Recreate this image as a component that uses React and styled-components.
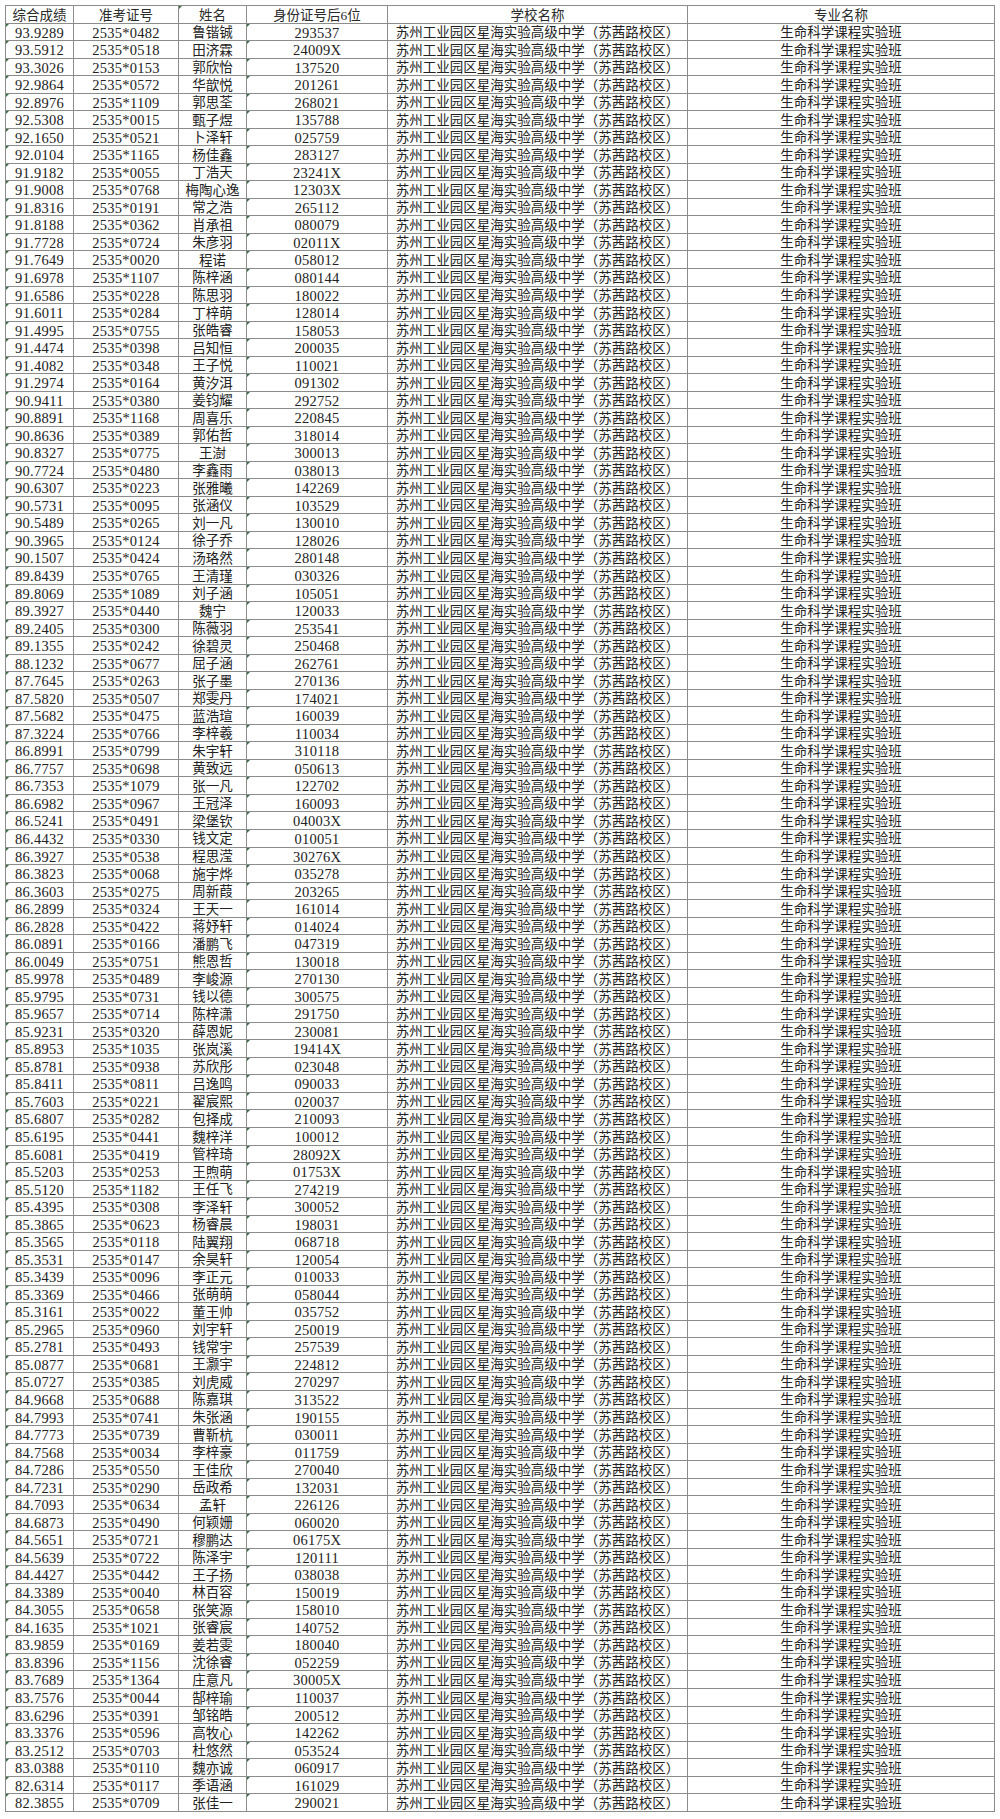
import React from "react";
import styled, { createGlobalStyle, css } from "styled-components";

const GlobalStyle = createGlobalStyle`
  html, body {
    margin: 0;
    padding: 0;
    background: #ffffff;
  }
  body {
    font-family: "Liberation Serif", "Noto Sans CJK SC", serif;
    color: #1e1e1e;
  }
`;

const Page = styled.div`
  padding: 5px 0 0 5px;
  width: 1000px;
  box-sizing: border-box;
`;

const Sheet = styled.div`
  display: grid;
  grid-template-columns: 67px 104px 67px 140px 299px 306px;
  grid-auto-rows: 16.544px;
  gap: 1px;
  padding: 1px;
  background: #8c8c8c;
  width: fit-content;
`;

const Cell = styled.div`
  position: relative;
  background: #ffffff;
  display: flex;
  align-items: center;
  justify-content: center;
  padding-top: 2px;
  box-sizing: border-box;
  font-size: 13.5px;
  line-height: 1;
  white-space: nowrap;
  overflow: hidden;
  font-family: "Liberation Serif", "Noto Sans CJK SC", serif;
  color: #222222;
  ${(p) =>
    p.$num &&
    css`
      font-size: 14.5px;
      letter-spacing: 0.25px;
    `}
  ${(p) =>
    p.$flag &&
    css`
      &::before {
        content: "";
        position: absolute;
        left: 0;
        top: 0;
        width: 0;
        height: 0;
        border-top: 3px solid #3d6e45;
        border-right: 3px solid transparent;
      }
    `}
`;

const HeadCell = styled(Cell)`
  color: #2a2a2a;
`;

const DATA = `93.9289|2535*0482|鲁锴铖|293537
93.5912|2535*0518|田济霖|24009X
93.3026|2535*0153|郭欣怡|137520
92.9864|2535*0572|华歆悦|201261
92.8976|2535*1109|郭思荃|268021
92.5308|2535*0015|甄子煜|135788
92.1650|2535*0521|卜泽轩|025759
92.0104|2535*1165|杨佳鑫|283127
91.9182|2535*0055|丁浩天|23241X
91.9008|2535*0768|梅陶心逸|12303X
91.8316|2535*0191|常之浩|265112
91.8188|2535*0362|肖承祖|080079
91.7728|2535*0724|朱彦羽|02011X
91.7649|2535*0020|程诺|058012
91.6978|2535*1107|陈梓涵|080144
91.6586|2535*0228|陈思羽|180022
91.6011|2535*0284|丁梓萌|128014
91.4995|2535*0755|张皓睿|158053
91.4474|2535*0398|吕知恒|200035
91.4082|2535*0348|王子悦|110021
91.2974|2535*0164|黄汐洱|091302
90.9411|2535*0380|姜钧耀|292752
90.8891|2535*1168|周喜乐|220845
90.8636|2535*0389|郭佑哲|318014
90.8327|2535*0775|王澍|300013
90.7724|2535*0480|李鑫雨|038013
90.6307|2535*0223|张雅曦|142269
90.5731|2535*0095|张涵仪|103529
90.5489|2535*0265|刘一凡|130010
90.3965|2535*0124|徐子乔|128026
90.1507|2535*0424|汤珞然|280148
89.8439|2535*0765|王清瑾|030326
89.8069|2535*1089|刘子涵|105051
89.3927|2535*0440|魏宁|120033
89.2405|2535*0300|陈薇羽|253541
89.1355|2535*0242|徐碧灵|250468
88.1232|2535*0677|屈子涵|262761
87.7645|2535*0263|张子墨|270136
87.5820|2535*0507|郑雯丹|174021
87.5682|2535*0475|蓝浩瑄|160039
87.3224|2535*0766|李梓羲|110034
86.8991|2535*0799|朱宇轩|310118
86.7757|2535*0698|黄致远|050613
86.7353|2535*1079|张一凡|122702
86.6982|2535*0967|王冠泽|160093
86.5241|2535*0491|梁堡钦|04003X
86.4432|2535*0330|钱文定|010051
86.3927|2535*0538|程思滢|30276X
86.3823|2535*0068|施宇烨|035278
86.3603|2535*0275|周新葭|203265
86.2899|2535*0324|王天一|161014
86.2828|2535*0422|蒋妤轩|014024
86.0891|2535*0166|潘鹏飞|047319
86.0049|2535*0751|熊恩哲|130018
85.9978|2535*0489|李峻源|270130
85.9795|2535*0731|钱以德|300575
85.9657|2535*0714|陈梓潇|291750
85.9231|2535*0320|薛恩妮|230081
85.8953|2535*1035|张岚溪|19414X
85.8781|2535*0938|苏欣彤|023048
85.8411|2535*0811|吕逸鸣|090033
85.7603|2535*0221|翟宸熙|020037
85.6807|2535*0282|包择成|210093
85.6195|2535*0441|魏梓洋|100012
85.6081|2535*0419|管梓琦|28092X
85.5203|2535*0253|王煦萌|01753X
85.5120|2535*1182|王任飞|274219
85.4395|2535*0308|李泽轩|300052
85.3865|2535*0623|杨睿晨|198031
85.3565|2535*0118|陆翼翔|068718
85.3531|2535*0147|余昊轩|120054
85.3439|2535*0096|李正元|010033
85.3369|2535*0466|张萌萌|058044
85.3161|2535*0022|董王帅|035752
85.2965|2535*0960|刘宇轩|250019
85.2781|2535*0493|钱常宇|257539
85.0877|2535*0681|王灏宇|224812
85.0727|2535*0385|刘虎威|270297
84.9668|2535*0688|陈嘉琪|313522
84.7993|2535*0741|朱张涵|190155
84.7773|2535*0739|曹靳杭|030011
84.7568|2535*0034|李梓豪|011759
84.7286|2535*0550|王佳欣|270040
84.7231|2535*0290|岳政希|132031
84.7093|2535*0634|孟轩|226126
84.6873|2535*0490|何颖姗|060020
84.5651|2535*0721|穆鹏达|06175X
84.5639|2535*0722|陈泽宇|120111
84.4427|2535*0442|王子扬|038038
84.3389|2535*0040|林百容|150019
84.3055|2535*0658|张笑源|158010
84.1635|2535*1021|张睿宸|140752
83.9859|2535*0169|姜若雯|180040
83.8396|2535*1156|沈徐睿|052259
83.7689|2535*1364|庄意凡|30005X
83.7576|2535*0044|郜梓瑜|110037
83.6296|2535*0391|邹铭皓|200512
83.3376|2535*0596|高牧心|142262
83.2512|2535*0703|杜悠然|053524
83.0388|2535*0110|魏亦诚|060917
82.6314|2535*0117|季语涵|161029
82.3855|2535*0709|张佳一|290021`;

const SCHOOL = "苏州工业园区星海实验高级中学（苏茜路校区）";
const MAJOR = "生命科学课程实验班";

const HEADERS = ["综合成绩", "准考证号", "姓名", "身份证号后6位", "学校名称", "专业名称"];

const rows = DATA.split("\n").map((line) => line.split("|"));

export default function App() {
  return (
    <>
      <GlobalStyle />
      <Page>
        <Sheet role="table">
          {HEADERS.map((h, i) => (
            <HeadCell key={h} role="columnheader" $flag={i === 2}>
              {h}
            </HeadCell>
          ))}
          {rows.map(([score, ticket, name, id6]) => (
            <React.Fragment key={ticket}>
              <Cell role="cell" $num $flag>
                {score}
              </Cell>
              <Cell role="cell" $num>
                {ticket}
              </Cell>
              <Cell role="cell">{name}</Cell>
              <Cell role="cell" $num $flag>
                {id6}
              </Cell>
              <Cell role="cell">{SCHOOL}</Cell>
              <Cell role="cell">{MAJOR}</Cell>
            </React.Fragment>
          ))}
        </Sheet>
      </Page>
    </>
  );
}
